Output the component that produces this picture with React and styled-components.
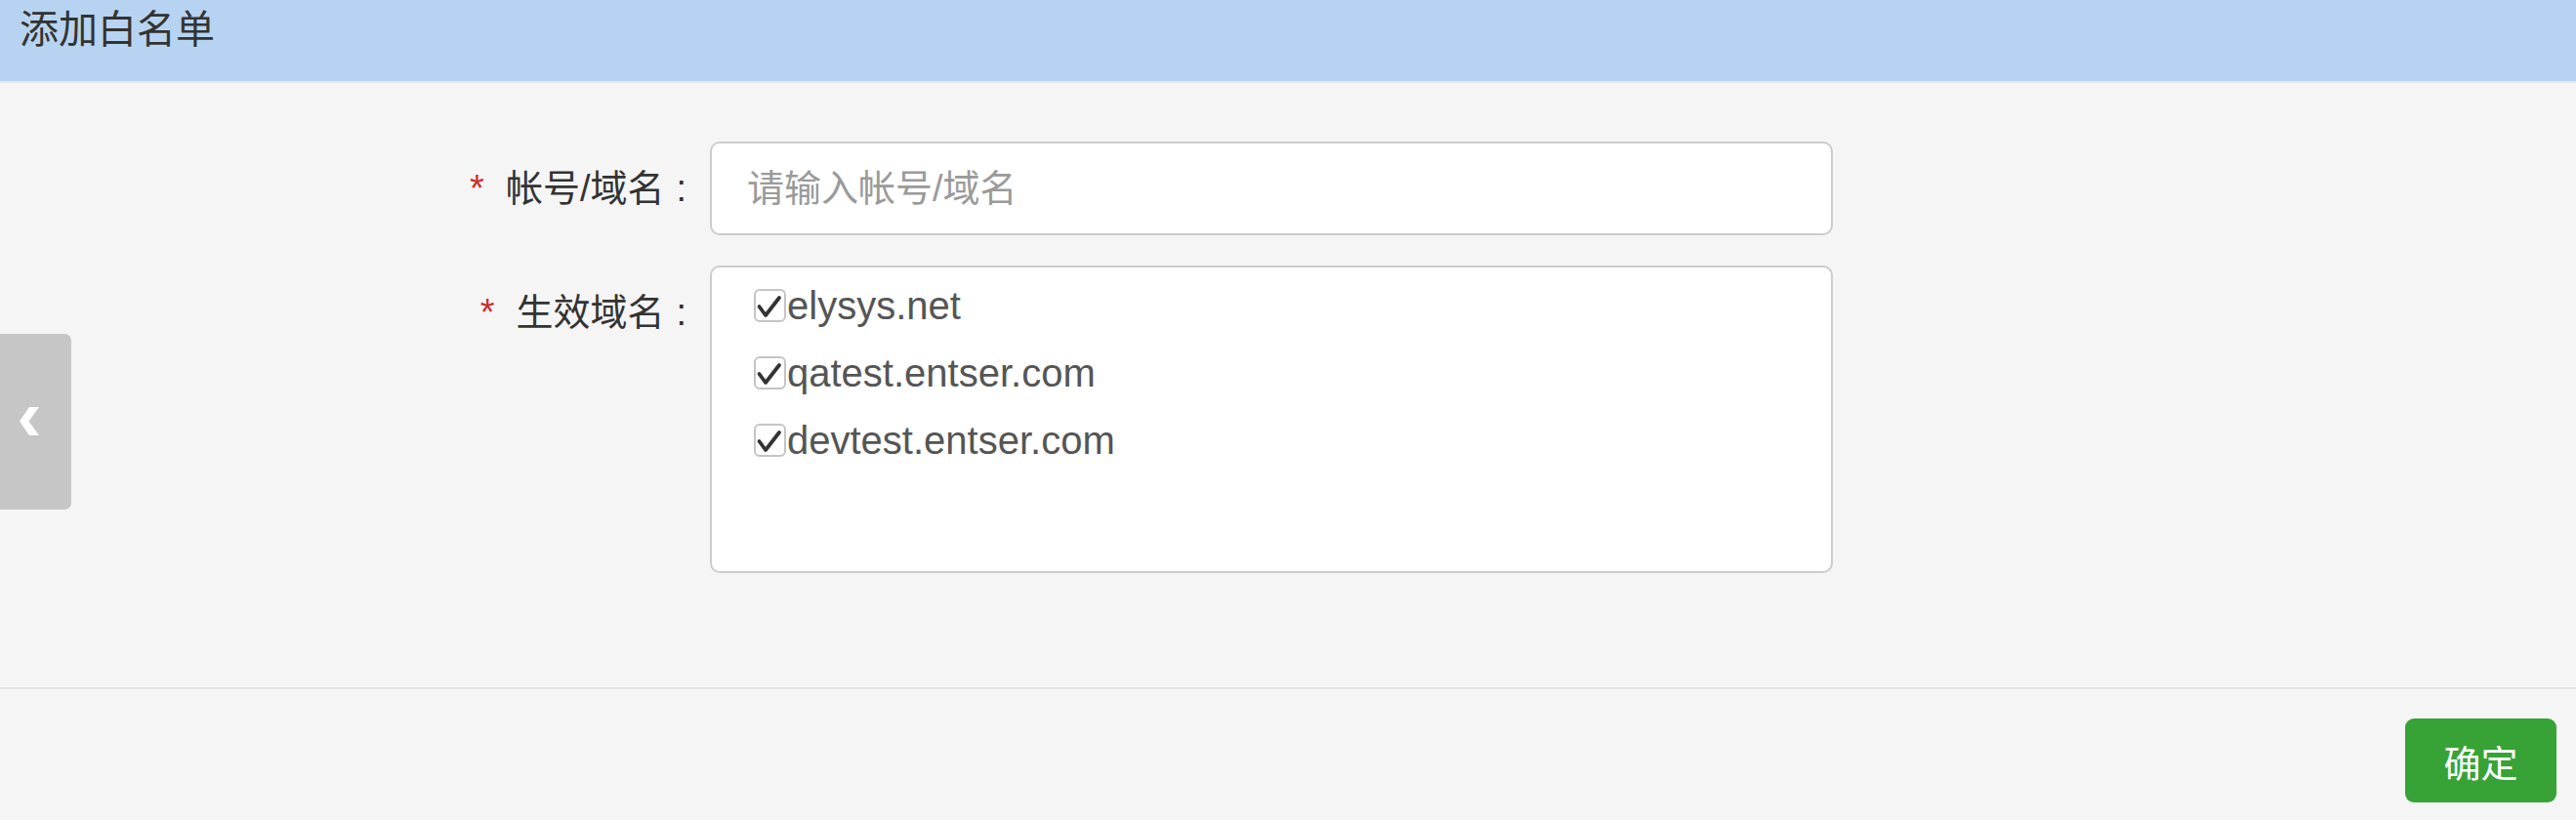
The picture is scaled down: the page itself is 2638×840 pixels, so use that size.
import styled, { createGlobalStyle } from "styled-components";

const GlobalStyle = createGlobalStyle`
  html, body {
    margin: 0;
    padding: 0;
    background: #f5f5f5;
  }
  * {
    box-sizing: border-box;
  }
`;

const fontStack = `"Liberation Sans", "Noto Sans CJK SC", sans-serif`;

const Page = styled.div`
  position: relative;
  display: flex;
  flex-direction: column;
  min-height: 840px;
  background: #f5f5f5;
  font-family: ${fontStack};
  color: #333;
`;

const TitleBar = styled.div`
  height: 85px;
  padding: 0 20px;
  background: #b6d4f1;
  border-bottom: 2px solid #e6e6e6;
  font-size: 40px;
  line-height: 60px;
  color: #333;
`;

const FormArea = styled.div`
  flex: 1;
  padding-top: 60px;
`;

const FormGrid = styled.div`
  display: grid;
  grid-template-columns: 700px 1150px;
  column-gap: 27px;
  row-gap: 31px;
`;

const Label = styled.label`
  text-align: right;
  font-size: 38px;
  line-height: 96px;
  color: #333;
  white-space: nowrap;
`;

const Star = styled.span`
  color: #c9302c;
  margin-right: 22px;
`;

const Colon = styled.span`
  margin-left: 12px;
  margin-right: -3px;
`;

const TextInput = styled.input`
  height: 96px;
  width: 100%;
  padding: 0 20px 0 36px;
  border: 2px solid #cccccc;
  border-radius: 10px;
  background: #fff;
  font-family: ${fontStack};
  font-size: 38px;
  color: #333;
  outline: none;

  &::placeholder {
    color: #9a9a9a;
  }
`;

const CheckBox = styled.div`
  height: 315px;
  padding: 4px 0 0 43px;
  border: 2px solid #cccccc;
  border-radius: 10px;
  background: #fff;
`;

const CheckRow = styled.label`
  display: flex;
  align-items: center;
  height: 69px;
  font-size: 40px;
  line-height: 40px;
  color: #555;
`;

const Tick = styled.span`
  display: inline-flex;
  width: 33px;
  height: 34px;
  margin-right: 1px;
  border: 2px solid #c4c4c4;
  border-radius: 6px;
  background: #fff;
`;

const Footer = styled.div`
  display: flex;
  justify-content: flex-end;
  height: 136px;
  padding: 30px 20px 0 0;
  border-top: 2px solid #e3e3e3;
`;

const OkButton = styled.button`
  width: 155px;
  height: 86px;
  border: none;
  border-radius: 9px;
  background: #37a337;
  color: #fff;
  font-family: ${fontStack};
  font-size: 38px;
  cursor: pointer;
`;

const SideTab = styled.div`
  position: absolute;
  left: 0;
  top: 342px;
  width: 73px;
  height: 180px;
  display: flex;
  align-items: center;
  padding-left: 20px;
  background: #c6c6c6;
  border-radius: 0 7px 7px 0;
`;

const domains = ["elysys.net", "qatest.entser.com", "devtest.entser.com"];

const CheckMark = () => (
  <svg width="29" height="30" viewBox="0 0 29 30">
    <path
      d="M3.5 16 L10 25 L24 7"
      fill="none"
      stroke="#333"
      strokeWidth="3.8"
      strokeLinecap="round"
      strokeLinejoin="round"
    />
  </svg>
);

const Chevron = () => (
  <svg width="20" height="30" viewBox="0 0 20 30">
    <polygon points="10,0 20,0 9.5,14.5 20,29 10,29 0,14.5" fill="#fff" />
  </svg>
);

const App = () => {
  return (
    <Page>
      <GlobalStyle />
      <TitleBar>添加白名单</TitleBar>
      <FormArea>
        <FormGrid>
          <Label>
            <Star>*</Star>帐号/域名<Colon>:</Colon>
          </Label>
          <TextInput placeholder="请输入帐号/域名" />
          <Label>
            <Star>*</Star>生效域名<Colon>:</Colon>
          </Label>
          <CheckBox>
            {domains.map((d) => (
              <CheckRow key={d}>
                <Tick>
                  <CheckMark />
                </Tick>
                {d}
              </CheckRow>
            ))}
          </CheckBox>
        </FormGrid>
      </FormArea>
      <Footer>
        <OkButton>确定</OkButton>
      </Footer>
      <SideTab>
        <Chevron />
      </SideTab>
    </Page>
  );
};

export default App;
